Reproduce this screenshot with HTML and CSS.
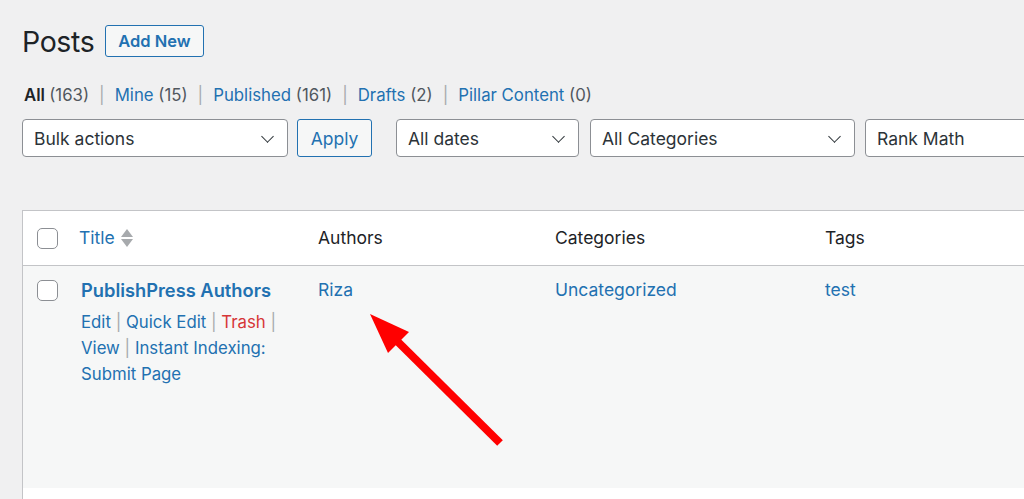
FILE: index.html
```html
<!DOCTYPE html>
<html>
  <head>
    <link rel="stylesheet" href="styles.css">
  </head>
  <body>
    <div class="wrap">
      <div class="title-bar">
        <h1 class="page-title">Posts</h1>
        <a class="add-new">Add New</a>
      </div>

      <ul class="subsubsub">
        <li class="current">All <span class="count">(163)</span></li>
        <li class="sep">|</li>
        <li><a>Mine</a> <span class="count">(15)</span></li>
        <li class="sep">|</li>
        <li><a>Published</a> <span class="count">(161)</span></li>
        <li class="sep">|</li>
        <li><a>Drafts</a> <span class="count">(2)</span></li>
        <li class="sep">|</li>
        <li><a>Pillar Content</a> <span class="count">(0)</span></li>
      </ul>

      <div class="tablenav">
        <div class="select bulk">Bulk actions<span class="chev"></span></div>
        <a class="btn apply">Apply</a>
        <div class="select dates">All dates<span class="chev"></span></div>
        <div class="select cats">All Categories<span class="chev"></span></div>
        <div class="select rank">Rank Math<span class="chev"></span></div>
      </div>

      <div class="posts-table">
        <div class="row head">
          <div class="cell check"><span class="checkbox"></span></div>
          <div class="cell"><a class="sortable">Title <span class="sort-ind"><i class="up"></i><i class="down"></i></span></a></div>
          <div class="cell">Authors</div>
          <div class="cell">Categories</div>
          <div class="cell">Tags</div>
          <div class="cell"></div>
        </div>
        <div class="row body">
          <div class="cell check"><span class="checkbox"></span></div>
          <div class="cell">
            <a class="row-title">PublishPress Authors</a>
            <div class="row-actions">
              <a>Edit</a> <span class="bar">|</span> <a>Quick Edit</a> <span class="bar">|</span> <a class="trash">Trash</a> <span class="bar">|</span><br>
              <a>View</a> <span class="bar">|</span> <a>Instant Indexing:<br>Submit Page</a>
            </div>
          </div>
          <div class="cell"><a>Riza</a></div>
          <div class="cell"><a>Uncategorized</a></div>
          <div class="cell"><a>test</a></div>
          <div class="cell"></div>
        </div>
        <div class="row next"></div>
      </div>
    </div>

    <svg class="callout" width="1024" height="499" viewBox="0 0 1024 499">
      <line x1="500" y1="443" x2="392" y2="336" stroke="#ff0000" stroke-width="8" />
      <polygon points="370,314 409,332 388,353" fill="#ff0000" />
    </svg>
  </body>
</html>
```

FILE: styles.css
```css
html,
body {
  margin: 0;
  padding: 0;
  background-color: #f0f0f1;
  overflow: hidden;
  height: 499px;
}
body {
  font-family: Inter, "Noto Sans", sans-serif;
  font-size: 16.5px;
  color: #3c434a;
  position: relative;
}
a {
  color: #2271b1;
  text-decoration: none;
}
.wrap {
  width: 1140px;
  padding: 25px 0 0 22px;
}

/* heading */
.title-bar {
  display: flex;
  align-items: center;
  gap: 11px;
  height: 32px;
}
.page-title {
  margin: 0;
  font-size: 28.5px;
  font-weight: 400;
  color: #1d2327;
  letter-spacing: -0.4px;
}
.add-new {
  display: flex;
  align-items: center;
  height: 30px;
  padding: 0 12px;
  border: 1px solid #2271b1;
  border-radius: 3px;
  background-color: #f6f7f7;
  font-weight: 600;
  font-size: 16.5px;
}

/* filter links */
.subsubsub {
  list-style: none;
  margin: 0;
  padding: 0 0 0 2px;
  display: flex;
  height: 26px;
  line-height: 26px;
  margin-top: 25px;
  font-size: 16.8px;
}
.subsubsub li {
  white-space: pre;
}
.subsubsub .current {
  color: #1d2327;
  font-weight: 600;
}
.subsubsub .current .count {
  font-weight: 400;
}
.count {
  color: #50575e;
}
.sep {
  color: #a7aaad;
  padding: 0 10px;
}

/* selects */
.tablenav {
  display: flex;
  gap: 9px;
  margin-top: 11px;
  height: 38px;
}
.select {
  position: relative;
  display: flex;
  align-items: center;
  box-sizing: border-box;
  height: 38px;
  padding: 0 11px;
  border: 1px solid #8c8f94;
  border-radius: 4px;
  background-color: #fff;
  color: #2c3338;
  font-size: 17.5px;
}
.chev {
  position: absolute;
  right: 15px;
  top: 12px;
  width: 8px;
  height: 8px;
  border-right: 1.6px solid #2c3338;
  border-bottom: 1.6px solid #2c3338;
  transform: rotate(45deg);
}
.bulk {
  width: 266px;
}
.dates {
  width: 183px;
  margin-left: 15px;
}
.cats {
  width: 265px;
  margin-left: 2px;
}
.rank {
  width: 240px;
  margin-left: 1px;
}
.btn {
  display: flex;
  align-items: center;
  box-sizing: border-box;
  height: 38px;
  width: 75px;
  justify-content: center;
  border: 1px solid #2271b1;
  border-radius: 3px;
  background-color: #f6f7f7;
  font-size: 17.5px;
}

/* table */
.posts-table {
  margin-top: 53px;
  border: 1px solid #c3c4c7;
  border-right: 0;
  background-color: #fff;
}
.row {
  display: grid;
  grid-template-columns: 46px 239px 237px 270px 1fr;
}
.head {
  height: 54px;
  border-bottom: 1px solid #c3c4c7;
  color: #1d2327;
  font-size: 17.5px;
}
.head .cell {
  padding: 14px 10px 0;
  line-height: 26px;
}
.body {
  height: 222px;
  background-color: #f6f7f7;
  font-size: 17.5px;
}
.body .cell {
  padding: 11px 10px 0;
  line-height: 26px;
}
.next {
  height: 20px;
}
.cell.check {
  padding: 0 0 0 14px;
}
.head .cell.check {
  padding-top: 17px;
}
.body .cell.check {
  padding-top: 14px;
}
.checkbox {
  display: block;
  box-sizing: border-box;
  width: 21px;
  height: 21px;
  border: 1px solid #8c8f94;
  border-radius: 5px;
  background-color: #fff;
}
.sortable {
  display: inline-flex;
  align-items: center;
  gap: 6px;
}
.sort-ind {
  display: inline-flex;
  flex-direction: column;
  gap: 2px;
}
.sort-ind i {
  width: 0;
  height: 0;
  border-left: 6px solid transparent;
  border-right: 6px solid transparent;
}
.sort-ind .up {
  border-bottom: 8px solid #a7aaad;
}
.sort-ind .down {
  border-top: 8px solid #a7aaad;
}
.row-title {
  display: block;
  padding-left: 2px;
  font-weight: 600;
  font-size: 18.3px;
}
.row-actions {
  margin-top: 6px;
  padding-left: 2px;
  font-size: 16.8px;
}
.row-actions .bar {
  color: #a7aaad;
}
.row-actions .trash {
  color: #d63638;
}

/* red arrow annotation */
.callout {
  position: absolute;
  left: 0;
  top: 0;
  pointer-events: none;
}
```
